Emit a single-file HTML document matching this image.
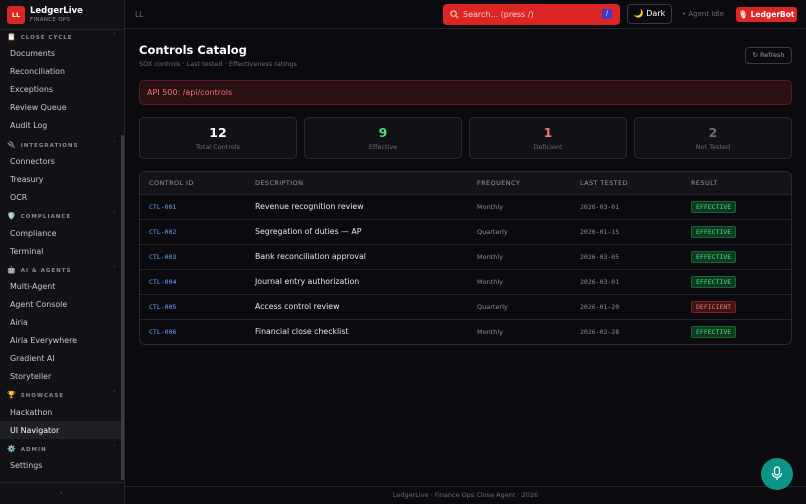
<!DOCTYPE html>
<html><head><meta charset="utf-8"><style>
*{box-sizing:border-box;margin:0;padding:0}
body{width:806px;height:504px;background:#0b0b0f;font-family:"DejaVu Sans","Liberation Sans",sans-serif;color:#e5e7eb;position:relative;overflow:hidden;font-size:8px}
.sb{position:absolute;left:0;top:0;width:125px;height:504px;background:#111116;border-right:1px solid #26262d}
.logo{position:absolute;left:7px;top:6px;width:18px;height:18px;background:#dc2626;border-radius:3px;color:#fff;font-weight:bold;font-size:6.5px;text-align:center;line-height:18px}
.bn{position:absolute;left:30px;top:6px;font-weight:bold;font-size:8.5px;color:#fff}
.bs{position:absolute;left:30px;top:17px;font-size:5.5px;color:#8b8b95;letter-spacing:.3px}
.hl{position:absolute;left:0;width:125px;top:29px;border-top:1px solid #26262d}
.sec{position:absolute;left:7px;font-size:5.5px;font-weight:bold;letter-spacing:1px;color:#8b8b95}
.sec i{font-style:normal;margin-right:4px;font-size:7px}
.sec b{position:absolute;left:106px;color:#555}
.it{position:absolute;left:10px;font-size:7.9px;color:#c8c8d0}
.act{position:absolute;left:0;width:122px;top:421px;height:18px;background:#1f1f26}
.scr{position:absolute;left:121px;top:135px;width:3px;height:345px;background:#3a3a44;border-radius:2px}
.top{position:absolute;left:125px;top:0;right:0;height:29px;border-bottom:1px solid #26262d}
.search{position:absolute;left:443px;top:4px;width:177px;height:21px;background:#dc2626;border-radius:4px;color:#fecaca;font-size:8px;line-height:21px;padding-left:20px}
.kbd{position:absolute;right:8px;top:5px;width:10px;height:10px;background:#4338ca;border-radius:2px;color:#fff;font-size:6px;line-height:10px;text-align:center}
.btn{position:absolute;border:1px solid #3a3a44;border-radius:4px;font-size:8px;text-align:center}
.main{position:absolute;left:139px;width:653px}
.card{position:absolute;top:117px;width:158px;height:42px;border:1px solid #2a2a33;border-radius:5px;background:#111116;text-align:center}
.card .n{font-size:12.5px;font-weight:bold;margin-top:7px}
.card .l{font-size:6.5px;color:#6b6b75;margin-top:3px}
table{position:absolute;left:139px;top:171px;width:653px;border-collapse:separate;border-spacing:0;border:1px solid #2a2a33;border-radius:6px;overflow:hidden}
th{height:22px;background:#131318;font-weight:normal;color:#9a9aa5;font-size:6.5px;letter-spacing:.4px;text-align:left;vertical-align:middle}
td{height:25px;border-top:1px solid #24242b;font-size:7.8px;color:#e5e7eb;vertical-align:middle;line-height:10px}
.id{font-family:"DejaVu Sans Mono",monospace;color:#60a5fa;font-size:6.5px}
.fq{color:#8b8b95;font-size:6.5px}
.dt{font-family:"DejaVu Sans Mono",monospace;color:#8b8b95;font-size:6.5px}
.bd{font-family:"DejaVu Sans Mono",monospace;font-size:6.5px;padding:1px 4px;border-radius:2px;background:#0f3a1f;color:#4ade80;border:1px solid #166534;display:inline-block;line-height:8px}
.bd.r{background:#3f1416;color:#f87171;border-color:#7f1d1d}
</style></head><body>
<div class="sb">
<div class="logo">LL</div><div class="bn">LedgerLive</div><div class="bs">FINANCE OPS</div>
<div class="hl"></div>
<div class="sec" style="top:33px"><i>📋</i>CLOSE CYCLE<b>˅</b></div>
<div class="it" style="top:49px">Documents</div>
<div class="it" style="top:67px">Reconciliation</div>
<div class="it" style="top:85px">Exceptions</div>
<div class="it" style="top:103px">Review Queue</div>
<div class="it" style="top:121px">Audit Log</div>
<div class="sec" style="top:141px"><i>🔌</i>INTEGRATIONS<b>˅</b></div>
<div class="it" style="top:157px">Connectors</div>
<div class="it" style="top:175px">Treasury</div>
<div class="it" style="top:193px">OCR</div>
<div class="sec" style="top:212px"><i>🛡️</i>COMPLIANCE<b>˅</b></div>
<div class="it" style="top:229px">Compliance</div>
<div class="it" style="top:247px">Terminal</div>
<div class="sec" style="top:266px"><i>🤖</i>AI &amp; AGENTS<b>˅</b></div>
<div class="it" style="top:282px">Multi-Agent</div>
<div class="it" style="top:300px">Agent Console</div>
<div class="it" style="top:318px">Airia</div>
<div class="it" style="top:336px">Airia Everywhere</div>
<div class="it" style="top:354px">Gradient AI</div>
<div class="it" style="top:372px">Storyteller</div>
<div class="sec" style="top:391px"><i>🏆</i>SHOWCASE<b>˅</b></div>
<div class="it" style="top:408px">Hackathon</div>
<div class="act"></div>
<div class="it" style="top:426px;color:#fff">UI Navigator</div>
<div class="sec" style="top:445px"><i>⚙️</i>ADMIN<b>˅</b></div>
<div class="it" style="top:461px">Settings</div>
<div class="scr"></div>
<div style="position:absolute;left:0;top:482px;width:125px;border-top:1px solid #26262d"></div>
<div style="position:absolute;left:60px;top:489px;color:#666;font-size:7px">‹</div>
</div>
<div class="top"><div style="position:absolute;left:10px;top:10px;color:#6b6b75;font-size:7.5px">LL</div></div>
<div class="search"><svg style="position:absolute;left:7px;top:6px" width="9" height="9" viewBox="0 0 10 10"><circle cx="4" cy="4" r="3" fill="none" stroke="#fecaca" stroke-width="1.2"/><path d="M6.3 6.3L9 9" stroke="#fecaca" stroke-width="1.2"/></svg>Search... (press /)<div class="kbd">/</div></div>
<div class="btn" style="left:627px;top:4px;width:45px;height:20px;line-height:18px;color:#fff;background:#0b0b0f">🌙 Dark</div>
<div style="position:absolute;left:682px;top:10px;font-size:7px;color:#6b6b75">• Agent Idle</div>
<div style="position:absolute;left:736px;top:7px;width:61px;height:15px;background:#dc2626;border-radius:3px;color:#fff;font-weight:bold;font-size:7.5px;line-height:15px;text-align:center">🎙 LedgerBot</div>
<div class="main" style="top:43px;font-size:11.5px;font-weight:bold;color:#fff">Controls Catalog</div>
<div class="main" style="top:60px;font-size:6.5px;color:#6b6b75">SOX controls · Last tested · Effectiveness ratings</div>
<div class="btn" style="left:745px;top:47px;width:47px;height:17px;line-height:15px;color:#9a9aa5;font-size:6.5px">↻ Refresh</div>
<div class="main" style="top:80px;height:25px;background:#2a1013;border:1px solid #5c1a1e;border-radius:5px;color:#f87171;font-size:8px;line-height:23px;padding-left:7px">API 500: /api/controls</div>
<div class="card" style="left:139px"><div class="n" style="color:#fff">12</div><div class="l">Total Controls</div></div>
<div class="card" style="left:304px"><div class="n" style="color:#4ade80">9</div><div class="l">Effective</div></div>
<div class="card" style="left:469px"><div class="n" style="color:#f87171">1</div><div class="l">Deficient</div></div>
<div class="card" style="left:634px"><div class="n" style="color:#6b6b75">2</div><div class="l">Not Tested</div></div>
<table>
<tr><th style="padding-left:9px;width:115px">CONTROL ID</th><th style="width:222px">DESCRIPTION</th><th style="width:103px">FREQUENCY</th><th style="width:111px">LAST TESTED</th><th>RESULT</th></tr>
<tr><td style="padding-left:9px" class="id">CTL-001</td><td>Revenue recognition review</td><td class="fq">Monthly</td><td class="dt">2026-03-01</td><td><span class="bd">EFFECTIVE</span></td></tr>
<tr><td style="padding-left:9px" class="id">CTL-002</td><td>Segregation of duties — AP</td><td class="fq">Quarterly</td><td class="dt">2026-01-15</td><td><span class="bd">EFFECTIVE</span></td></tr>
<tr><td style="padding-left:9px" class="id">CTL-003</td><td>Bank reconciliation approval</td><td class="fq">Monthly</td><td class="dt">2026-03-05</td><td><span class="bd">EFFECTIVE</span></td></tr>
<tr><td style="padding-left:9px" class="id">CTL-004</td><td>Journal entry authorization</td><td class="fq">Monthly</td><td class="dt">2026-03-01</td><td><span class="bd">EFFECTIVE</span></td></tr>
<tr><td style="padding-left:9px" class="id">CTL-005</td><td>Access control review</td><td class="fq">Quarterly</td><td class="dt">2026-01-20</td><td><span class="bd r">DEFICIENT</span></td></tr>
<tr><td style="padding-left:9px" class="id">CTL-006</td><td>Financial close checklist</td><td class="fq">Monthly</td><td class="dt">2026-02-28</td><td><span class="bd">EFFECTIVE</span></td></tr>
</table>
<div style="position:absolute;left:125px;right:0;top:486px;border-top:1px solid #26262d;text-align:center;font-size:6.5px;color:#6b6b75;padding-top:4px">LedgerLive · Finance Ops Close Agent · 2026</div>
<div style="position:absolute;left:761px;top:458px;width:32px;height:32px;border-radius:50%;background:#0d9488"><svg style="position:absolute;left:10px;top:8px" width="12" height="16" viewBox="0 0 12 16"><rect x="3.5" y="1" width="5" height="8" rx="2.5" fill="none" stroke="#fff" stroke-width="1.3"/><path d="M1.5 7a4.5 4.5 0 0 0 9 0M6 11.5V14" fill="none" stroke="#fff" stroke-width="1.3"/></svg></div>
</body></html>
